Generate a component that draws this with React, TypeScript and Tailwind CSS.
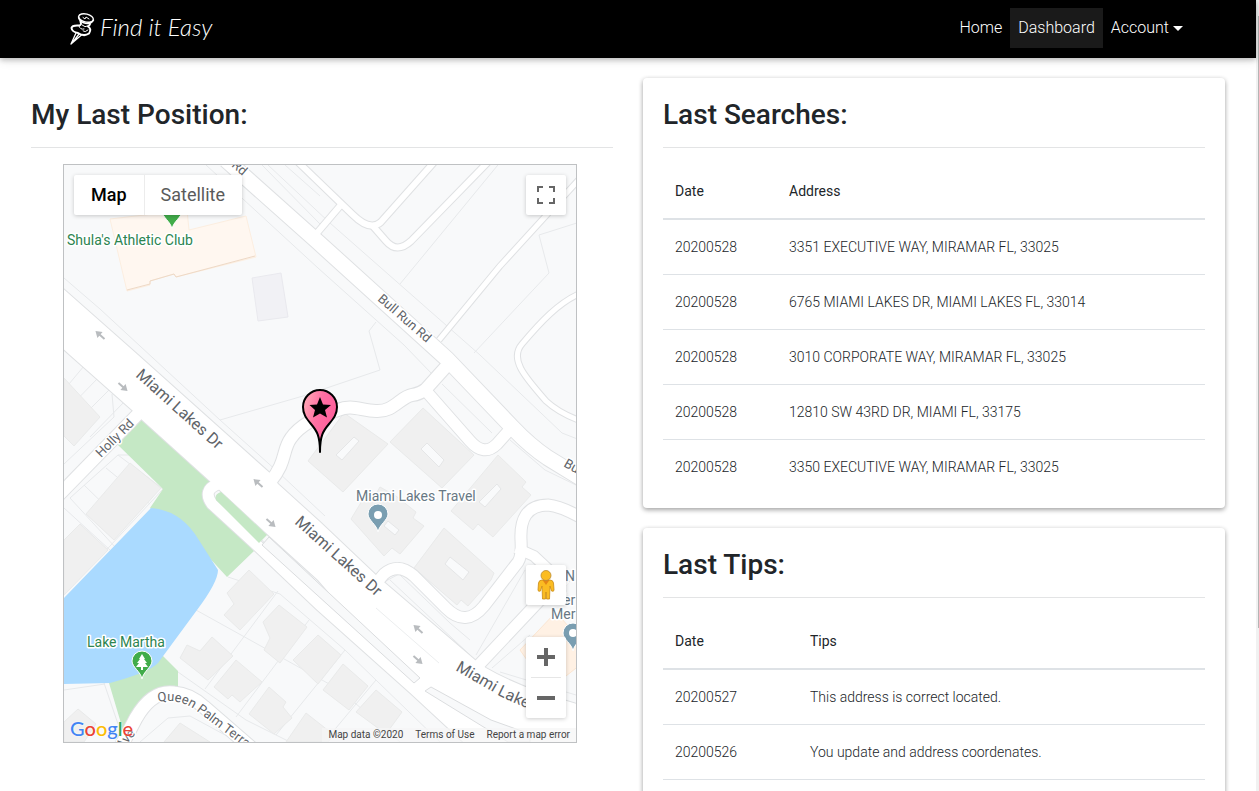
import React from "react";

const searches = [
  ["20200528", "3351 EXECUTIVE WAY, MIRAMAR FL, 33025"],
  ["20200528", "6765 MIAMI LAKES DR, MIAMI LAKES FL, 33014"],
  ["20200528", "3010 CORPORATE WAY, MIRAMAR FL, 33025"],
  ["20200528", "12810 SW 43RD DR, MIAMI FL, 33175"],
  ["20200528", "3350 EXECUTIVE WAY, MIRAMAR FL, 33025"],
];

const tips = [
  ["20200527", "This address is correct located."],
  ["20200526", "You update and address coordenates."],
];

const roads: { d: string; w: number }[] = [
  { d: "M226 160 L318 242 L447 359 L512 427 Q530 446 548 458 L584 480", w: 15 },
  { d: "M452 360 L426 389 Q420 394 412 395 C400 397 394 412 376 411 C362 411 352 404 338 410 C318 416 300 425 291 438 C282 450 287 462 270 482", w: 12 },
  { d: "M426 391 L470 441 Q484 457 497 444 L513 426", w: 11 },
  { d: "M374 586 L384 574 Q398 562 414 576 L446 608 Q466 628 484 606 L518 562 Q522 556 521 540 C520 520 526 505 548 505 Q560 506 580 517", w: 11 },
  { d: "M476 668 L540 600 L566 590", w: 11 },
  { d: "M516 548 L534 556 L566 586", w: 10 },
  { d: "M140 412 L58 496", w: 12 },
  { d: "M218 484 Q202 490 212 504 L260 548 L320 605 L414 689 L480 750", w: 11 },
  { d: "M118 752 L136 718 Q152 690 174 693 Q190 694 204 707 L256 752", w: 13 },
  { d: "M296 160 L352 214 Q370 232 381 222 L436 160", w: 6 },
  { d: "M372 225 L386 241 Q397 254 411 241 L490 160", w: 6 },
  { d: "M340 206 L317 233", w: 6 },
  { d: "M439 340 L500 266 L584 174", w: 5 },
  { d: "M584 292 C560 300 538 325 522 344 C508 360 528 380 546 401 Q560 414 584 422", w: 5 },
];

const arterial =
  "M60 286 L138 355 L272 475 L278 484 L320 522 L378 577 L475 660 L486 668 Q520 688 580 705 L580 746 L480 746 L408 684 L318 580 L265 532 L212 483 L140 418 L132 410 L70 355 L60 346 Z";

const parcels = [
  "M64 278 L100 309 L220 420 L278 472 L325 516",
  "M206 165 L318 268 L404 345",
  "M376 322 L369 331 L380 370 L303 396 M220 420 L303 396",
  "M268 165 L330 223 L480 355 L562 433 L580 440",
  "M502 160 L400 284",
  "M262 165 L320 224 M285 165 L320 196",
  "M580 222 L539 235 L549 273 L474 353",
  "M404 345 L432 374",
  "M442 384 L492 433",
  "M510 440 L545 470 L580 487",
  "M64 390 L84 366 M64 413 L98 378 M76 423 L109 390 M90 437 L124 402 M112 394 L114 417 L64 464",
  "M70 498 L118 455 L163 489 L84 574 M84 485 L120 520 M70 498 L116 548 M106 468 L150 504",
  "M64 508 L110 550 M118 455 L136 455",
  "M262 540 L420 682 M266 534 L425 677",
  "M196 610 L340 690 L400 742 M178 672 L246 720 L290 742",
  "M278 591 L205 689 M309 620 L236 717 M345 650 L276 735 M376 680 L326 740",
  "M228 577 L280 594 L345 650 L440 742",
  "M470 655 L390 580 M525 570 L476 655 M384 582 L399 574 L450 623 L470 640",
  "M492 668 L530 635 M500 672 L576 695",
  "M104 683 L118 724 M64 690 L105 684",
  "M140 742 L168 718 L190 716 L238 742",
];

const buildings = [
  "M344 413 L388 444 L343 492 L308 461 Z",
  "M423 408 L474 455 L442 488 L390 442 Z",
  "M498 455 L526 482 L522 487 L531 495 L493 537 L478 524 L473 530 L451 511 Z",
  "M368 491 L376 494 L380 487 L396 496 L416 512 L413 518 L424 526 L400 554 L392 548 L384 556 L351 519 Z",
  "M444 528 L494 573 L491 580 L468 606 L461 600 L457 605 L414 568 Z",
  "M64 378 L100 417 L74 446 L64 436 Z",
  "M130 463 L161 488 L114 540 L86 514 Z",
  "M80 524 L108 550 L64 595 L64 540 Z",
  "M249 570 L274 594 L240 630 L224 615 L234 604 L227 593 Z",
  "M279 605 L307 627 L280 663 L264 650 L270 638 L263 622 Z",
  "M212 637 L233 656 L208 680 L180 658 L187 645 L200 651 Z",
  "M236 660 L262 682 L240 702 L232 695 L228 699 L214 687 Z",
  "M318 635 L341 655 L318 684 L293 660 Z",
  "M269 687 L286 702 L283 707 L292 718 L274 734 L249 714 Z",
  "M343 664 L368 686 L349 710 L323 690 Z",
  "M376 690 L402 712 L386 734 L356 712 Z",
  "M306 713 L334 735 L328 742 L286 742 Z",
  "M180 723 L210 742 L164 742 Z",
  "M78 709 L96 724 L84 742 L64 742 L64 722 Z",
];

const courtyards = [
  "M354 437 L359 441 L342 460 L336 455 Z",
  "M427 443 L444 460 L439 467 L421 449 Z",
  "M497 484 L501 489 L485 507 L479 502 Z",
  "M388 521 L399 530 L395 535 L384 526 Z",
  "M450 557 L469 572 L463 580 L445 564 Z",
];

function LaneArrow({ x, y, back }: { x: number; y: number; back?: boolean }) {
  return (
    <path
      transform={`translate(${x} ${y}) rotate(${back ? 221 : 41})`}
      d="M-6 -1 H0 V-4 L6 0 L0 4 V1 H-6 Z"
      fill="#b9bcbf"
    />
  );
}

function PlacePin({ x, y, color }: { x: number; y: number; color: string }) {
  return (
    <path
      transform={`translate(${x} ${y})`}
      d="M0 14 C-1 7 -10 2 -10 -4 A10 10 0 1 1 10 -4 C10 2 1 7 0 14 Z"
      fill={color}
      stroke="#fff"
      strokeWidth="1"
    />
  );
}

function MapDrawing() {
  return (
    <svg
      viewBox="64 165 512 577"
      preserveAspectRatio="xMidYMid slice"
      className="block h-full w-full font-['Roboto',sans-serif]"
      role="img"
      aria-label="Street map of Miami Lakes"
    >
      <defs>
        <linearGradient id="pink" x1="0" y1="0" x2="1" y2="0.5">
          <stop offset="0" stopColor="#ffb3b8" />
          <stop offset="0.5" stopColor="#ff6fa3" />
          <stop offset="1" stopColor="#ff5c9a" />
        </linearGradient>
        <path id="queenPalm" d="M158 702 Q178 698 194 709 L262 760" />
        <path id="lakesEast" d="M455 670 L500 696 Q530 711 580 728" />
      </defs>

      <rect x="64" y="165" width="512" height="577" fill="#f8f9fa" />
      <path d="M110 219 L187 210 L189 230 L246 216 L256 257 L176 277 L174 274 L150 281 L150 285 L127 291 Z" fill="#fff7f0" stroke="#fceee0" strokeWidth="1" />
      <path d="M127 290 L150 284 L150 281 L174 274 L176 277 L255 256" fill="none" stroke="#eed9c6" />
      <path d="M252 278 L281 273 L288 317 L258 321 Z" fill="#f1f1f5" stroke="#e9e9ee" />
      <path d="M520 650 L556 612 L580 640 L580 665 L548 690 Z" fill="#fff1e4" stroke="#fbe6d2" />

      <g fill="none" stroke="#e7e9eb" strokeWidth="1">
        {parcels.map((d) => <path key={d} d={d} />)}
      </g>
      <g fill="#f0f0f0" stroke="#e9eaea" strokeWidth="1">
        {buildings.map((d) => <path key={d} d={d} />)}
      </g>
      <g fill="#f9fafb" stroke="#e5e6e7" strokeWidth="1">
        {courtyards.map((d) => <path key={d} d={d} />)}
      </g>

      <path d="M140 418 L212 483 L203 497 L254 551 L227 577 L205 553 L150 508 L163 489 L118 445 Z" fill="#c5e8c5" />
      <path d="M109 683 L162 655 L178 671 L178 692 L150 705 L124 742 L120 720 Z" fill="#c5e8c5" />
      <path d="M64 598 L151 508 Q178 510 195 534 L218 570 Q218 582 197 610 L158 663 Q150 672 110 683 L64 684 Z" fill="#aadaff" />

      <g fill="none" stroke="#dfe1e3">
        {roads.map((r) => <path key={r.d} d={r.d} strokeWidth={r.w + 2} />)}
        <path d={arterial} strokeWidth="2" />
      </g>
      <g fill="none" stroke="#fff">
        <path d={arterial} fill="#fff" stroke="none" />
        {roads.map((r) => <path key={r.d} d={r.d} strokeWidth={r.w} />)}
      </g>
      <path d="M221 492 L267 535 L259 543 L216 500 Q214 494 221 492 Z" fill="#c5e8c5" />
      <path d="M269 537 L420 678 L414 683 L262 545 Z" fill="#f8f9fa" stroke="#dbdddf" />
      <path d="M431 687 L491 720 L530 734 L530 742 L508 742 L425 691 Z" fill="#f8f9fa" stroke="#dbdddf" />
      <path d="M376 608 L439 663" stroke="#eceeef" fill="none" />

      <LaneArrow x={100} y={335} back />
      <LaneArrow x={123} y={387} />
      <LaneArrow x={258} y={483} back />
      <LaneArrow x={271} y={523} />
      <LaneArrow x={418} y={629} back />
      <LaneArrow x={418} y={660} />

      <g fill="#5f6469" stroke="#fff" strokeWidth="3" paintOrder="stroke" strokeLinejoin="round">
        <text transform="translate(135 376) rotate(42)" fontSize="16">Miami Lakes Dr</text>
        <text transform="translate(294 523) rotate(42)" fontSize="16">Miami Lakes Dr</text>
        <text fontSize="16"><textPath href="#lakesEast">Miami Lakes Dr</textPath></text>
        <text transform="translate(377 300) rotate(41)" fontSize="13">Bull Run Rd</text>
        <text transform="translate(563 466) rotate(30)" fontSize="13">Bu</text>
        <text transform="translate(231 166) rotate(41)" fontSize="13">Rd</text>
        <text transform="translate(101 458) rotate(-45)" fontSize="13">Holly Rd</text>
        <text transform="translate(122 750) rotate(-50)" fontSize="13">Ave</text>
        <text fontSize="13"><textPath href="#queenPalm">Queen Palm Terra</textPath></text>
      </g>

      <PlacePin x={172} y={215} color="#41ac4a" />
      <PlacePin x={378} y={518} color="#7a9eb1" />
      <circle cx="378" cy="515" r="4" fill="#fff" />
      <PlacePin x={573} y={637} color="#7a9eb1" />
      <circle cx="573" cy="633" r="4" fill="#fff" />
      <PlacePin x={142} y={665} color="#41ac4a" />
      <path d="M142 654 L145 659 H144 L147 663 H145 L148 667 H143 V670 H141 V667 H136 L139 663 H137 L140 659 H139 Z" fill="#fff" />

      <g stroke="#fff" strokeWidth="3" paintOrder="stroke" strokeLinejoin="round" fontSize="14">
        <text x="67" y="245" fill="#2c8450">Shula's Athletic Club</text>
        <text x="87" y="647" fill="#2c8450">Lake Martha</text>
        <text x="356" y="501" fill="#687884">Miami Lakes Travel</text>
        <text x="565" y="581" fill="#687884">N</text>
        <text x="563" y="605" fill="#687884">er</text>
        <text x="551" y="619" fill="#687884">Mer</text>
      </g>

      <path
        d="M320 452 C320 436 317 431 311 424 C306 418 303 414 303 407 A17 17 0 0 1 337 407 C337 414 334 418 329 424 C323 431 320 436 320 452 Z"
        fill="url(#pink)"
        stroke="#000"
        strokeWidth="2"
        strokeLinejoin="round"
      />
      <path d="M320 397 L323 404.500 L331 405 L325 410 L327 417.500 L320 413.500 L313 417.500 L315 410 L309.500 405 L317 404.500 Z" fill="#000" />
    </svg>
  );
}

function MapPanel() {
  return (
    <div className="relative h-[579px] overflow-hidden border border-[#bfc1c3] font-['Roboto',sans-serif]">
      <MapDrawing />
      <div className="absolute left-[10px] top-[10px] flex h-10 rounded-xs bg-white text-lg shadow-[0_1px_4px_rgba(0,0,0,0.2)]">
        <button className="border-r border-[#ececec] px-[17px] font-medium text-black">Map</button>
        <button className="pr-[17px] pl-4 text-[#5a5a5a]">Satellite</button>
      </div>
      <button aria-label="Toggle fullscreen view" className="absolute right-[10px] top-[10px] flex h-10 w-10 items-center justify-center rounded-xs bg-white shadow-[0_1px_4px_rgba(0,0,0,0.2)]">
        <svg viewBox="0 0 18 18" className="size-[18px]" fill="#666">
          <path d="M0 0v6h2V2h4V0H0zM16 0h-4v2h4v4h2V0h-2zM16 16h-4v2h6v-6h-2v4zM2 12H0v6h6v-2H2v-4z" />
        </svg>
      </button>
      <div className="absolute bottom-6 right-[10px] flex w-10 flex-col gap-8">
        <button aria-label="Street View" className="flex h-10 items-center justify-center rounded-xs bg-white shadow-[0_1px_4px_rgba(0,0,0,0.2)]">
          <svg viewBox="0 0 18 32" className="h-8 w-[18px]">
            <path d="M5 11 Q2 11 1.500 14 L1 21 Q1 23 3.500 22 L5 17 L5.500 30 H8.500 L9 23 L9.500 30 H12.500 L13 17 L14.500 22 Q17 23 17 21 L16.500 14 Q16 11 13 11 Z" fill="#fbbc22" stroke="#c98a17" strokeWidth="0.800" />
            <path d="M5.500 11 L9 16 L12.500 11 Z" fill="#e48616" />
            <circle cx="9" cy="6.500" r="5" fill="#fbbc22" stroke="#b98a36" strokeWidth="0.800" />
          </svg>
        </button>
        <div className="flex h-[81px] flex-col items-center rounded-xs bg-white shadow-[0_1px_4px_rgba(0,0,0,0.2)]">
          <button aria-label="Zoom in" className="flex h-10 w-10 items-center justify-center">
            <svg viewBox="0 0 18 18" className="size-[18px]" fill="#666"><path d="M7 0h4v7h7v4h-7v7H7v-7H0V7h7z" /></svg>
          </button>
          <div className="h-px w-[30px] bg-[#e6e6e6]" />
          <button aria-label="Zoom out" className="flex h-10 w-10 items-center justify-center">
            <svg viewBox="0 0 18 18" className="size-[18px]" fill="#666"><path d="M0 7h18v4H0z" /></svg>
          </button>
        </div>
      </div>
      <a href="#google" className="absolute bottom-0 left-[6px] font-['Lato',sans-serif] text-[20px] leading-7 font-medium [text-shadow:0_0_2px_#fff]">
        <span className="text-[#4285f4]">G</span>
        <span className="text-[#ea4335]">o</span>
        <span className="text-[#fbbc05]">o</span>
        <span className="text-[#4285f4]">g</span>
        <span className="text-[#34a853]">l</span>
        <span className="text-[#ea4335]">e</span>
      </a>
      <div className="absolute bottom-0 right-0 flex h-[14px] items-center gap-3 bg-[#f5f5f5]/70 px-[6px] text-[10px] leading-[14px] text-[#444]">
        <span>Map data ©2020</span>
        <a href="#terms">Terms of Use</a>
        <a href="#report">Report a map error</a>
      </div>
    </div>
  );
}

function Heading({ children }: { children: React.ReactNode }) {
  return (
    <h2 className="mb-4 border-b border-[#e3e4e5] pb-[15px] text-[28px] leading-[34px] font-medium text-[#212529]">
      {children}
    </h2>
  );
}

function TableCard({ title, column, dateWidth, rows }: { title: string; column: string; dateWidth: string; rows: string[][] }) {
  return (
    <section className="rounded-sm bg-white px-5 pt-5 pb-[14px] shadow-[0_2px_5px_0_rgba(0,0,0,0.3),0_1px_5px_0_rgba(0,0,0,0.1)]">
      <Heading>{title}</Heading>
      <table className="w-full border-collapse text-left text-sm">
        <thead>
          <tr className="h-[55px] border-b-2 border-[#dee2e6] text-[#212529]">
            <th className={`px-3 font-normal ${dateWidth}`}>Date</th>
            <th className="px-3 font-normal">{column}</th>
          </tr>
        </thead>
        <tbody>
          {rows.map((row, i) => (
            <tr key={i} className="h-[55px] border-b border-[#dee2e6] font-light text-[#212529] last:border-b-0">
              <td className="px-3">{row[0]}</td>
              <td className="px-3">{row[1]}</td>
            </tr>
          ))}
        </tbody>
      </table>
    </section>
  );
}

function PinLogo() {
  return (
    <svg viewBox="0 0 26 34" className="h-[34px] w-[26px]" fill="none" stroke="#fff" strokeWidth="1.400" strokeLinecap="round" strokeLinejoin="round">
      <ellipse cx="16" cy="6" rx="7.500" ry="4" transform="rotate(14 16 6)" />
      <path d="M8.500 5 Q9 9 13 10.500 Q20 13.500 23.500 8" />
      <path d="M13 5.500 l2 1.500 l1 -2 l3 2" strokeWidth="1" />
      <path d="M10.500 9.500 Q12 13 9 13.500 Q2 13 1.500 16 Q2 20 8 21 Q14 25 19 21.500 Q22 17 18 14.500 Q20 13 20 12" strokeWidth="2" />
      <path d="M9 14 Q10 18 14 17 M13 19 q2 2 5 -1 M12 13 q3 3 6 1" strokeWidth="1" />
      <path d="M6 21 L1 32 M12 22.500 L1 32 M9 22 L3 30" strokeWidth="1.300" />
    </svg>
  );
}

export default function App() {
  return (
    <div className="flex h-screen overflow-hidden bg-white font-['Roboto',sans-serif]">
      <div className="min-w-0 flex-1">
        <nav className="relative flex h-[58px] items-center justify-between bg-black pr-[65px] pl-[70px] shadow-[0_2px_5px_0_rgba(0,0,0,0.2),0_2px_10px_0_rgba(0,0,0,0.12)]">
          <a href="#top" className="flex items-center gap-1 text-white">
            <PinLogo />
            <span className="pb-1 font-['Lato',sans-serif] text-[24px] leading-8 font-light italic">Find it Easy</span>
          </a>
          <div className="mb-[2px] flex h-10 text-base font-light text-white">
            <a href="#home" className="flex items-center px-2">Home</a>
            <a href="#dashboard" className="flex items-center bg-[#1a1a1a] px-2">Dashboard</a>
            <button className="flex items-center gap-1 px-2">
              Account
              <svg viewBox="0 0 10 5" className="h-[5px] w-[10px]" fill="#fff"><path d="M0 0h10L5 5z" /></svg>
            </button>
          </div>
        </nav>
        <main className="grid grid-cols-2 items-start gap-[30px] px-[31px] pt-5">
          <section className="pt-5">
            <Heading>My Last Position:</Heading>
            <div className="pr-9 pl-8">
              <MapPanel />
            </div>
          </section>
          <div className="flex flex-col gap-5">
            <TableCard title="Last Searches:" column="Address" dateWidth="w-[114px]" rows={searches} />
            <TableCard title="Last Tips:" column="Tips" dateWidth="w-[135px]" rows={[...tips, ["", ""]]} />
          </div>
        </main>
      </div>
      <div className="flex w-[3px] flex-col bg-[#f1f1f1] pt-4 pl-[2px]">
        <div className="h-[79%] bg-[#b5b5b5]" />
      </div>
    </div>
  );
}
